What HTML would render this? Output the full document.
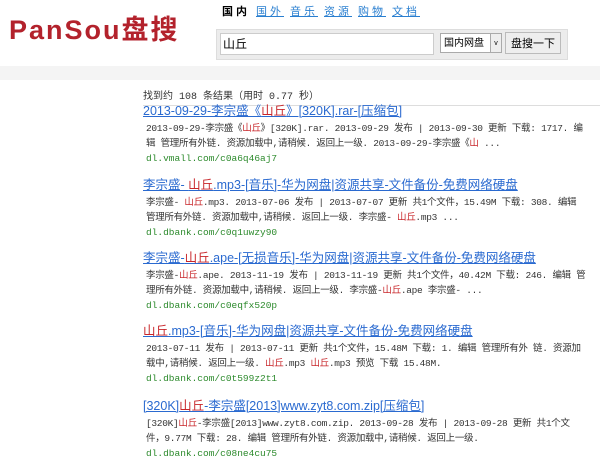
<!DOCTYPE html>
<html><head><meta charset="utf-8"><style>
body{margin:0;width:600px;height:458px;background:#fff;position:relative;overflow:hidden;font-family:"Liberation Sans","Noto Sans CJK SC",sans-serif}
.logo{position:absolute;left:9px;top:13px;font-size:27px;font-weight:bold;color:#b3222c;letter-spacing:2px;line-height:34px}
.nav{position:absolute;left:222px;top:5px;font-size:11px;line-height:14px;letter-spacing:3px}
.nav b{color:#000;margin-right:6px}
.nav a{color:#2a7fd0;text-decoration:underline;margin-right:6px}
.panel{position:absolute;left:216px;top:29px;width:350px;height:29px;background:#ececec;border:1px solid #ddd}
.inp{position:absolute;left:220px;top:33px;width:210px;height:20px;border:1px solid #ccc;background:#fff;font-size:12px;line-height:20px;padding-left:2px}
.sel{position:absolute;left:440px;top:33px;width:62px;height:20px;border:1px solid #aaa;background:#fff;font-size:10px;line-height:20px;padding-left:3px;box-sizing:border-box}
.sel span{position:absolute;right:0;top:0;width:10px;height:18px;border-left:1px solid #aaa;background:#eee;font-size:7px;text-align:center}
.btn{position:absolute;left:505px;top:32px;width:56px;height:22px;border:1px solid #bbb;background:#eee;font-size:11px;line-height:22px;text-align:center;box-sizing:border-box}
.band{position:absolute;left:0;top:66px;width:600px;height:14px;background:#f4f4f4}
.cnt{position:absolute;left:143px;top:92px;font-size:10px;line-height:12px;color:#333;font-family:"Liberation Mono","Noto Sans CJK SC",monospace}
.hr{position:absolute;left:143px;top:105px;width:457px;height:1px;background:#ddd}
.r{position:absolute;left:143px;width:450px}
.t{font-size:12.5px;color:#2a6ad0;text-decoration:underline;line-height:16px;white-space:nowrap}
.s{margin-left:3px;margin-top:2px;font-size:9.5px;letter-spacing:-0.3px;color:#333;line-height:15px;font-family:"Liberation Mono","Noto Sans CJK SC",monospace;width:440px}
.u{margin-left:3px;font-size:9.5px;color:#2c8a2c;line-height:15px;font-family:"Liberation Mono",monospace}
em{font-style:normal;color:#c8262a}
</style></head><body>
<div class="logo">PanSou盘搜</div>
<div class="nav"><b>国内</b><a>国外</a><a>音乐</a><a>资源</a><a>购物</a><a>文档</a></div>
<div class="panel"></div>
<div class="inp">山丘</div>
<div class="sel">国内网盘<span>v</span></div>
<div class="btn">盘搜一下</div>
<div class="band"></div>
<div class="cnt">找到约 108 条结果（用时 0.77 秒）</div>
<div class="hr"></div>

<div class="r" style="top:103px"><div class="t">2013-09-29-李宗盛《<em>山丘</em>》[320K].rar-[压缩包]</div>
<div class="s">2013-09-29-李宗盛《<em>山丘</em>》[320K].rar. 2013-09-29 发布 | 2013-09-30 更新 下载: 1717. 编辑 管理所有外链. 资源加载中,请稍候. 返回上一级. 2013-09-29-李宗盛《<em>山</em> ...</div>
<div class="u">dl.vmall.com/c0a6q46aj7</div></div>

<div class="r" style="top:177px"><div class="t">李宗盛- <em>山丘</em>.mp3-[音乐]-华为网盘|资源共享-文件备份-免费网络硬盘</div>
<div class="s">李宗盛- <em>山丘</em>.mp3. 2013-07-06 发布 | 2013-07-07 更新 共1个文件，15.49M 下载: 308. 编辑 管理所有外链. 资源加载中,请稍候. 返回上一级. 李宗盛- <em>山丘</em>.mp3 ...</div>
<div class="u">dl.dbank.com/c0q1uwzy90</div></div>

<div class="r" style="top:250px"><div class="t">李宗盛-<em>山丘</em>.ape-[无损音乐]-华为网盘|资源共享-文件备份-免费网络硬盘</div>
<div class="s">李宗盛-<em>山丘</em>.ape. 2013-11-19 发布 | 2013-11-19 更新 共1个文件，40.42M 下载: 246. 编辑 管理所有外链. 资源加载中,请稍候. 返回上一级. 李宗盛-<em>山丘</em>.ape 李宗盛- ...</div>
<div class="u">dl.dbank.com/c0eqfx520p</div></div>

<div class="r" style="top:323px"><div class="t"><em>山丘</em>.mp3-[音乐]-华为网盘|资源共享-文件备份-免费网络硬盘</div>
<div class="s">2013-07-11 发布 | 2013-07-11 更新 共1个文件，15.48M 下载: 1. 编辑 管理所有外 链. 资源加载中,请稍候. 返回上一级. <em>山丘</em>.mp3 <em>山丘</em>.mp3 预览 下载 15.48M.</div>
<div class="u">dl.dbank.com/c0t599z2t1</div></div>

<div class="r" style="top:398px"><div class="t">[320K]<em>山丘</em>-李宗盛[2013]www.zyt8.com.zip[压缩包]</div>
<div class="s">[320K]<em>山丘</em>-李宗盛[2013]www.zyt8.com.zip. 2013-09-28 发布 | 2013-09-28 更新 共1个文件，9.77M 下载: 28. 编辑 管理所有外链. 资源加载中,请稍候. 返回上一级.</div>
<div class="u">dl.dbank.com/c08ne4cu75</div></div>
</body></html>
